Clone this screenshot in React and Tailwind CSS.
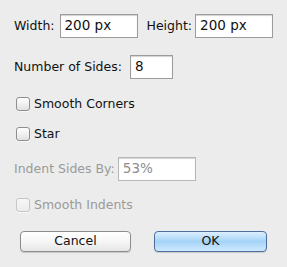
import React from "react";

const font = { fontFamily: '"DejaVu Sans", "Lucida Grande", sans-serif' };

function Input({ value, w, disabled }) {
  return (
    <div
      className={`h-[24px] ${w} border border-[#9c9c9c] bg-white flex items-center pl-[4px] shadow-[inset_0_1px_1px_rgba(0,0,0,0.18)] ${disabled ? "text-[#8e8e8e] border-[#b8b8b8]" : "text-[#111]"}`}
    >
      <span className="text-[13.5px] leading-none">{value}</span>
    </div>
  );
}

function Check({ label, disabled }) {
  return (
    <div className="h-[20px] flex items-center">
      <div
        className={`ml-[2px] w-[14px] h-[14px] rounded-[3px] border ${disabled ? "border-[#c6c6c6] bg-gradient-to-b from-[#f7f7f7] to-[#ececec]" : "border-[#8f8f8f] bg-gradient-to-b from-white to-[#e2e2e2]"} shadow-[0_1px_0_rgba(255,255,255,0.6)]`}
      />
      <span className={`ml-[4px] text-[12.5px] ${disabled ? "text-[#9a9a9a]" : "text-[#111]"}`}>{label}</span>
    </div>
  );
}

export default function App() {
  return (
    <div className="w-[287px] h-[267px] bg-[#ececec] pl-[14px] pt-[14px] overflow-hidden" style={font}>
      <div className="flex items-center h-[24px]">
        <span className="text-[12.5px] text-[#111]">Width:</span>
        <div className="ml-[5px]"><Input value="200 px" w="w-[78px]" /></div>
        <span className="ml-[9px] text-[12.5px] text-[#111]">Height:</span>
        <div className="ml-[3px]"><Input value="200 px" w="w-[78px]" /></div>
      </div>
      <div className="flex items-center h-[24px] mt-[17px]">
        <span className="text-[12.5px] text-[#111]">Number of Sides:</span>
        <div className="ml-[8px]"><Input value="8" w="w-[43px]" /></div>
      </div>
      <div className="mt-[15px]"><Check label="Smooth Corners" /></div>
      <div className="mt-[10px]"><Check label="Star" /></div>
      <div className="flex items-center h-[24px] mt-[13px]">
        <span className="text-[12.5px] text-[#9a9a9a]">Indent Sides By:</span>
        <div className="ml-[3px]"><Input value="53%" w="w-[78px]" disabled /></div>
      </div>
      <div className="mt-[14px]"><Check label="Smooth Indents" disabled /></div>
      <div className="flex mt-[16px] ml-[6px] gap-[23px]">
        <button className="w-[111px] h-[21px] rounded-[4px] border border-[#8d8d8d] bg-gradient-to-b from-white via-[#f6f6f6] to-[#e6e6e6] shadow-[0_1px_1px_rgba(0,0,0,0.15)] text-[12.5px] text-[#111] flex items-center justify-center">
          Cancel
        </button>
        <button className="w-[113px] h-[21px] rounded-[4px] border border-[#4d6f9e] bg-gradient-to-b from-[#dcefff] via-[#a4d3f7] to-[#cfe9fd] shadow-[0_1px_1px_rgba(0,0,0,0.15)] text-[12.5px] text-[#111] flex items-center justify-center">
          OK
        </button>
      </div>
    </div>
  );
}
